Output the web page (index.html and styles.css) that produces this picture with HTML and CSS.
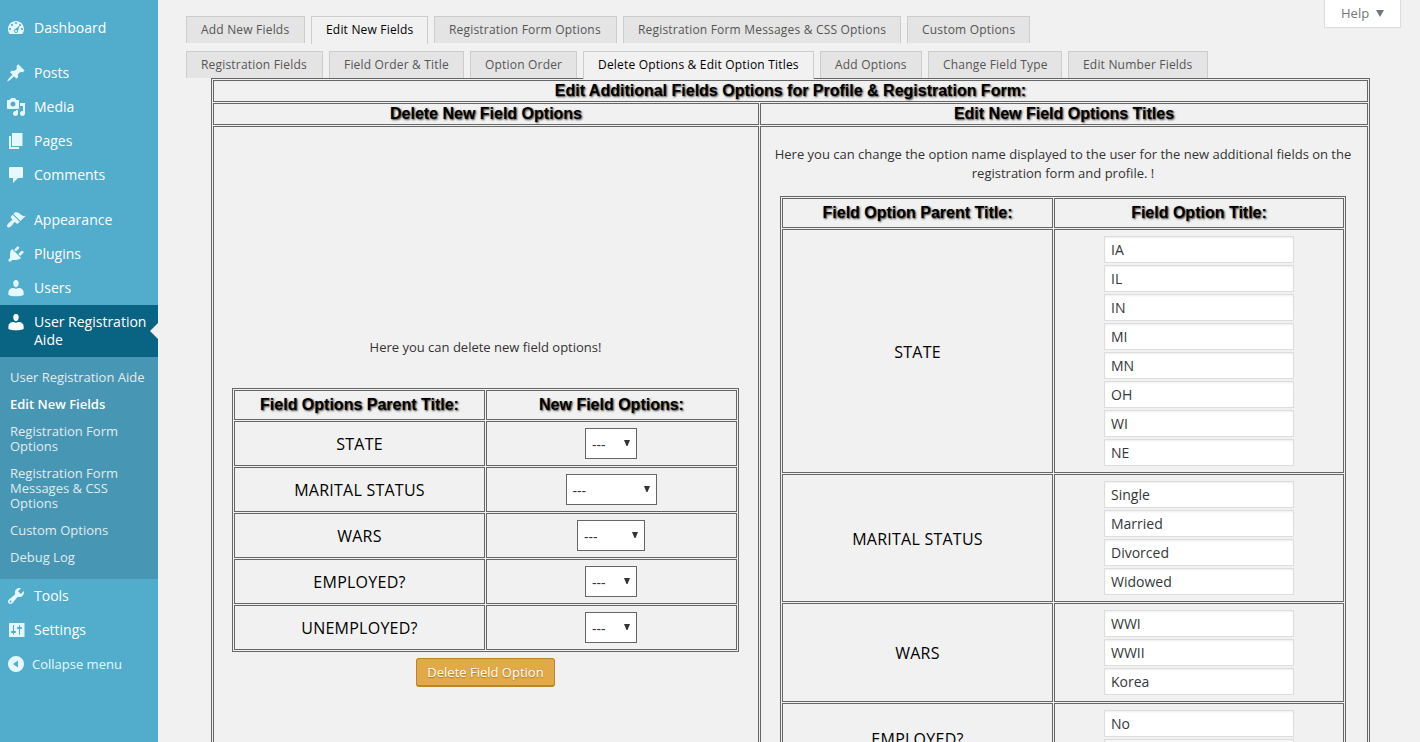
FILE: index.html
```html
<!DOCTYPE html>
<html lang="en">
<head>
<meta charset="utf-8">
<title>User Registration Aide</title>
<link rel="stylesheet" href="styles.css">
</head>
<body>
<div class="layout">
<nav class="menu">
  <a class="item"><svg viewBox="0 0 20 20"><path d="M3.76 16h12.48c1.1-1.37 1.76-3.11 1.76-5 0-4.42-3.58-8-8-8s-8 3.58-8 8c0 1.89.66 3.63 1.76 5zM10 4c.55 0 1 .45 1 1s-.45 1-1 1-1-.45-1-1 .45-1 1-1zM6 6c.55 0 1 .45 1 1s-.45 1-1 1-1-.45-1-1 .45-1 1-1zm8 0c.55 0 1 .45 1 1s-.45 1-1 1-1-.45-1-1 .45-1 1-1zm-.6 1.400L12 13c0 1.100-.9 2-2 2s-2-.9-2-2c0-.9.600-1.650 1.400-1.900zM4 10c.55 0 1 .45 1 1s-.45 1-1 1-1-.45-1-1 .45-1 1-1zm12 0c.55 0 1 .45 1 1s-.45 1-1 1-1-.45-1-1 .45-1 1-1zm-5 3c0-.55-.45-1-1-1s-1 .45-1 1 .45 1 1 1 1-.45 1-1z"/></svg><span>Dashboard</span></a>
  <a class="item spaced"><svg viewBox="0 0 20 20"><path d="M10.44 3.02l1.82-1.82 6.36 6.35-1.83 1.82c-1.05-.68-2.48-.57-3.41.36l-.75.75c-.92.93-1.04 2.35-.35 3.41l-1.83 1.82-2.41-2.41-2.8 2.79c-.42.42-3.38 2.71-3.8 2.29s1.86-3.39 2.28-3.81l2.79-2.79L4.1 9.36l1.83-1.82c1.05.69 2.48.57 3.4-.36l.75-.75c.93-.92 1.05-2.35.36-3.41z"/></svg><span>Posts</span></a>
  <a class="item"><svg viewBox="0 0 20 20"><path d="M13 11V4c0-.55-.45-1-1-1h-1.67L9 1H5L3.67 3H2c-.55 0-1 .45-1 1v7c0 .55.45 1 1 1h10c.55 0 1-.45 1-1zM7 4.5c1.38 0 2.5 1.12 2.5 2.5S8.38 9.5 7 9.5 4.5 8.38 4.5 7 5.62 4.5 7 4.5zM14 6h5v10.5c0 1.38-1.12 2.5-2.5 2.5S14 17.88 14 16.5s1.12-2.5 2.5-2.5c.17 0 .34.02.5.05V9h-3V6zm-4 8.05V13h2v3.5c0 1.38-1.12 2.5-2.5 2.5S7 17.88 7 16.5 8.12 14 9.5 14c.17 0 .34.02.5.05z"/></svg><span>Media</span></a>
  <a class="item"><svg viewBox="0 0 20 20"><path d="M6 15V2h10.500v13H6zm-1 1h8v2H3V5h2v11z"/></svg><span>Pages</span></a>
  <a class="item"><svg viewBox="0 0 20 20"><path d="M4 2h12c.55 0 1 .45 1 1v9c0 .55-.45 1-1 1h-4l-5 5v-5H4c-.55 0-1-.45-1-1V3c0-.55.45-1 1-1z"/></svg><span>Comments</span></a>
  <a class="item spaced"><svg viewBox="0 0 20 20"><path d="M14.48 11.06L7.41 3.99l1.5-1.5c.5-.56 2.3-.47 3.51.32 1.21.8 1.43 1.28 2.91 2.1 1.18.64 2.45 1.26 4.45.85zm-.71.71L6.7 4.7 4.93 6.47c-.39.39-.39 1.02 0 1.41l1.06 1.06c.39.39.39 1.03 0 1.42-.6.6-1.43 1.11-2.21 1.69-.35.26-.7.53-1.01.84C1.43 14.23.4 16.08 1.4 17.07c.99 1 2.84-.03 4.18-1.36.31-.31.58-.66.85-1.02.57-.78 1.08-1.61 1.69-2.21.39-.39 1.02-.39 1.41 0l1.06 1.06c.39.39 1.02.39 1.41 0z"/></svg><span>Appearance</span></a>
  <a class="item"><svg viewBox="0 0 20 20"><path d="M13.11 4.36L9.87 7.6 8 5.73l3.24-3.24c.35-.34 1.05-.2 1.56.32.52.51.66 1.21.31 1.55zm-8 1.77l.91-1.12 9.01 9.01-1.19.84c-.71.71-2.63 1.16-3.82 1.16H6.14L4.9 17.26c-.59.59-1.54.59-2.12 0-.59-.58-.59-1.53 0-2.12l1.24-1.24v-3.88c0-1.13.4-3.19 1.09-3.89zm7.26 3.97l3.24-3.24c.34-.35 1.04-.21 1.55.31.52.51.66 1.21.31 1.55l-3.24 3.25z"/></svg><span>Plugins</span></a>
  <a class="item"><svg viewBox="0 0 20 20"><path d="M10 9.25c-2.27 0-2.73-3.44-2.73-3.44C7 4.02 7.82 2 9.97 2c2.16 0 2.98 2.02 2.71 3.81 0 0-.41 3.44-2.68 3.44zm0 1.500L12.72 10c2.800 0 4.900 2 4.900 4.200v2.700s-3.500 1.400-7.600 1.400-7.600-1.400-7.600-1.400v-2.700c0-2.200 2-4.200 4.850-4.200z"/></svg><span>Users</span></a>
  <a class="item current"><svg viewBox="0 0 20 20"><path d="M10 9.25c-2.27 0-2.73-3.44-2.73-3.44C7 4.02 7.82 2 9.97 2c2.16 0 2.98 2.02 2.71 3.81 0 0-.41 3.44-2.68 3.44zm0 1.500L12.72 10c2.800 0 4.900 2 4.900 4.200v2.700s-3.500 1.400-7.600 1.400-7.600-1.400-7.600-1.400v-2.700c0-2.200 2-4.200 4.850-4.200z"/></svg><span>User Registration Aide</span></a>
  <div class="submenu">
    <a>User Registration Aide</a>
    <a class="on">Edit New Fields</a>
    <a>Registration Form Options</a>
    <a>Registration Form Messages &amp; CSS Options</a>
    <a>Custom Options</a>
    <a>Debug Log</a>
  </div>
  <a class="item"><svg viewBox="0 0 20 20"><path d="M16.68 9.77c-1.34 1.34-3.3 1.67-4.95.99l-5.41 6.52c-.99.99-2.59.99-3.58 0s-.99-2.59 0-3.57l6.52-5.42c-.68-1.65-.35-3.61.99-4.95 1.28-1.28 3.12-1.62 4.72-1.06l-2.89 2.89 2.82 2.82 2.86-2.87c.53 1.58.18 3.39-1.08 4.65zM3.81 16.21c.4.39 1.04.39 1.43 0 .4-.4.4-1.04 0-1.43-.39-.4-1.03-.4-1.43 0-.39.39-.39 1.03 0 1.43z"/></svg><span>Tools</span></a>
  <a class="item"><svg viewBox="0 0 20 20"><path d="M18.500 17V3H3v14zM8 11h1c.55 0 1 .45 1 1s-.45 1-1 1H8v1.500c0 .28-.22.5-.5.5s-.5-.22-.5-.5V13H6c-.55 0-1-.45-1-1s.45-1 1-1h1V5.500c0-.28.22-.5.5-.5s.5.22.5.5V11zm5-2h-1c-.55 0-1-.45-1-1s.45-1 1-1h1V5.500c0-.28.22-.5.5-.5s.5.22.5.5V7h1c.55 0 1 .45 1 1s-.45 1-1 1h-1v5.500c0 .28-.22.5-.5.5s-.5-.22-.5-.5V9z"/></svg><span>Settings</span></a>
  <a class="item collapse"><svg viewBox="0 0 20 20"><path fill-rule="evenodd" d="M10 2a8 8 0 1 0 0 16 8 8 0 0 0 0-16zM12 6.500v7L7 10z"/></svg><span>Collapse menu</span></a>
</nav>

<main class="content">
  <div class="help">Help <svg viewBox="0 0 8 7"><path d="M0 0h8L4 7z"/></svg></div>
  <div class="tabs first">
    <a class="w119">Add New Fields</a><a class="w117 on">Edit New Fields</a><a class="w183">Registration Form Options</a><a class="w278">Registration Form Messages &amp; CSS Options</a><a class="w123">Custom Options</a>
  </div>
  <div class="tabs second">
    <a class="w137">Registration Fields</a><a class="w135">Field Order &amp; Title</a><a class="w107">Option Order</a><a class="w231 on">Delete Options &amp; Edit Option Titles</a><a class="w102">Add Options</a><a class="w134">Change Field Type</a><a class="w140">Edit Number Fields</a>
  </div>

  <div class="frame panel">
    <div class="cell head span">Edit Additional Fields Options for Profile &amp; Registration Form:</div>
    <div class="cell head">Delete New Field Options</div>
    <div class="cell head">Edit New Field Options Titles</div>
    <div class="cell pane left">
      <p>Here you can delete new field options!</p>
      <div class="frame delete">
        <div class="cell head">Field Options Parent Title:</div><div class="cell head">New Field Options:</div>
        <div class="cell name">STATE</div><div class="cell choice"><div class="select s52">---<svg viewBox="0 0 6 6"><path d="M0 0h6L3.500 6h-1z"/></svg></div></div>
        <div class="cell name">MARITAL STATUS</div><div class="cell choice"><div class="select s91">---<svg viewBox="0 0 6 6"><path d="M0 0h6L3.500 6h-1z"/></svg></div></div>
        <div class="cell name">WARS</div><div class="cell choice"><div class="select s68">---<svg viewBox="0 0 6 6"><path d="M0 0h6L3.500 6h-1z"/></svg></div></div>
        <div class="cell name">EMPLOYED?</div><div class="cell choice"><div class="select s52">---<svg viewBox="0 0 6 6"><path d="M0 0h6L3.500 6h-1z"/></svg></div></div>
        <div class="cell name">UNEMPLOYED?</div><div class="cell choice"><div class="select s52">---<svg viewBox="0 0 6 6"><path d="M0 0h6L3.500 6h-1z"/></svg></div></div>
      </div>
      <button class="button">Delete Field Option</button>
    </div>
    <div class="cell pane right">
      <p>Here you can change the option name displayed to the user for the new additional fields on the registration form and profile. !</p>
      <div class="frame titles">
        <div class="cell head">Field Option Parent Title:</div><div class="cell head">Field Option Title:</div>
        <div class="cell name">STATE</div>
        <div class="cell inputs"><input value="IA"><input value="IL"><input value="IN"><input value="MI"><input value="MN"><input value="OH"><input value="WI"><input value="NE"></div>
        <div class="cell name">MARITAL STATUS</div>
        <div class="cell inputs"><input value="Single"><input value="Married"><input value="Divorced"><input value="Widowed"></div>
        <div class="cell name">WARS</div>
        <div class="cell inputs"><input value="WWI"><input value="WWII"><input value="Korea"></div>
        <div class="cell name">EMPLOYED?</div>
        <div class="cell inputs"><input value="No"><input value="Yes"></div>
      </div>
    </div>
  </div>
</main>
</div>
</body>
</html>
```
FILE: styles.css
```css
* { box-sizing: border-box; }
body {
  margin: 0;
  height: 742px;
  overflow: hidden;
  background: #f1f1f1;
  font: 13px/19px "Open Sans", sans-serif;
  color: #333;
}
.layout { display: flex; height: 742px; overflow: hidden; }

/* Sidebar */
.menu { width: 158px; flex: none; background: #52accc; padding-top: 11px; }
.item {
  display: flex;
  align-items: flex-start;
  gap: 8px;
  padding: 8px 0 8px 6px;
  font-size: 14px;
  line-height: 18px;
  color: #fff;
}
.item svg { width: 20px; height: 20px; flex: none; margin-top: -1px; margin-bottom: -1px; fill: #e5f8ff; }
.item.spaced { margin-top: 11px; }
.item.current { position: relative; background: #096484; }
.item.current svg { fill: #fff; }
.item.current::after {
  content: "";
  position: absolute;
  right: 0;
  top: 18px;
  border: 8px solid transparent;
  border-right-color: #f1f1f1;
  border-left: 0;
}
.item.collapse { gap: 6px; font-size: 13px; color: #e5f8ff; }
.submenu { background: #4796b3; padding: 7px 0 8px; }
.submenu a { display: block; padding: 6px 10px; line-height: 15px; color: #e2ecf1; }
.submenu a:first-child { padding-right: 0; }
.submenu .on { font-weight: 600; color: #fff; }

/* Content */
.content { position: relative; flex: 1; min-width: 0; padding-left: 28px; }
.help {
  position: absolute;
  right: 19px;
  top: 0;
  width: 77px;
  height: 28px;
  display: flex;
  align-items: center;
  gap: 7px;
  padding-left: 16px;
  background: #fff;
  border: 1px solid #ddd;
  border-top: 0;
  box-shadow: 0 1px 1px -1px rgba(0, 0, 0, .1);
  color: #777;
}
.help svg { width: 8px; height: 7px; fill: #72777c; }

.tabs { display: flex; gap: 6px; position: relative; z-index: 1; height: 27px; }
.tabs.first { margin-top: 16px; }
.tabs.second { margin-top: 8px; }
.tabs a {
  height: 27px;
  padding-left: 14px;
  border: 1px solid #ccc;
  border-bottom: 0;
  background: #e4e4e4;
  color: #555;
  font-size: 12px;
  font-weight: 500;
  letter-spacing: .19px;
  line-height: 26px;
  white-space: nowrap;
}
.tabs .on { height: 28px; background: #f1f1f1; color: #000; }
.w102 { width: 102px; } .w107 { width: 107px; } .w117 { width: 117px; }
.w119 { width: 119px; } .w123 { width: 123px; } .w134 { width: 134px; }
.w135 { width: 135px; } .w137 { width: 137px; } .w140 { width: 140px; }
.w183 { width: 183px; } .w231 { width: 231px; } .w278 { width: 278px; }

/* Double-ruled tables */
.frame { display: grid; gap: 1px; padding: 1px; border: 1px solid #666; }
.cell { border: 1px solid #666; display: flex; align-items: center; justify-content: center; color: #000; }
.head {
  font: bold 16px/20px "Liberation Sans", Arial, sans-serif;
  text-shadow: 1px 1px 2px #333;
}
.name { padding-top: 2px; font-size: 16px; font-weight: 500; letter-spacing: .25px; }
.choice { padding-right: 1px; }

.panel {
  width: 1159px;
  margin-left: 25px;
  grid-template-columns: 546px 1fr;
  grid-template-rows: 22px 22px 700px;
}
.span { grid-column: 1 / -1; }
.pane { flex-direction: column; justify-content: flex-start; }
.pane p { margin: 0; text-align: center; color: #333; }
.left { padding: 211px 1px 0 0; }
.right { padding: 18px 12px 0 10px; }

.delete {
  width: 507px;
  margin-top: 31px;
  grid-template-columns: 251px 251px;
  grid-template-rows: 30px repeat(5, 45px);
}
.select {
  height: 31px;
  display: flex;
  align-items: center;
  justify-content: space-between;
  padding: 2px 6px 0;
  background: #fff;
  border: 1px solid #666;
  font-size: 14px;
  color: #333;
}
.select svg { width: 6px; height: 6px; margin-top: -4px; fill: #333; }
.s52 { width: 52px; } .s68 { width: 68px; } .s91 { width: 91px; }

.button {
  width: 139px;
  height: 29px;
  margin-top: 6px;
  padding: 0;
  background: #e1a948;
  border: 1px solid #bd8427;
  border-bottom-width: 2px;
  border-radius: 3px;
  font: 13px/26px "Open Sans", sans-serif;
  color: #fff;
  text-shadow: 0 1px 1px #b07a22;
}

.titles {
  width: 566px;
  margin-top: 13px;
  grid-template-columns: 271px 1fr;
  grid-template-rows: 30px;
}
.inputs { flex-direction: column; gap: 2px; padding: 6px 0; }
.inputs input {
  width: 190px;
  height: 27px;
  padding: 1px 6px;
  background: #fff;
  border: 1px solid #ddd;
  box-shadow: inset 0 1px 2px rgba(0, 0, 0, .07);
  font: 14px "Open Sans", sans-serif;
  color: #32373c;
}
```
